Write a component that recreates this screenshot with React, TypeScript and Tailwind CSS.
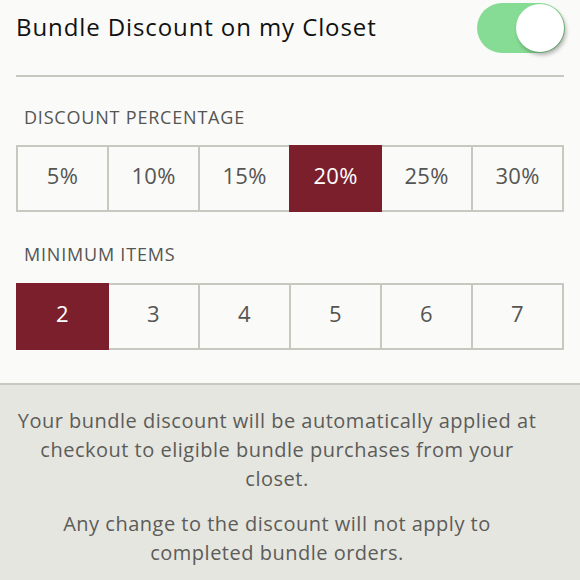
import React, { useState } from 'react';

const PERCENTS = ['5%', '10%', '15%', '20%', '25%', '30%'];
const ITEMS = ['2', '3', '4', '5', '6', '7'];

// Segmented row of options, one of which is picked
const OptionRow = ({
  options,
  value,
  onPick,
}: {
  options: string[];
  value: string;
  onPick: (v: string) => void;
}) => (
  <div className="mx-4 flex h-[67px]">
    {options.map((opt, i) => {
      const active = opt === value;
      return (
        <button
          key={opt}
          onClick={() => onPick(opt)}
          className={`flex flex-1 items-center justify-center border-2 pb-[6px] text-[22px] tracking-[0.3px] ${
            i === 0 ? '' : '-ml-[2px]'
          } ${
            active
              ? 'relative z-10 border-[#7b1f2d] bg-[#7b1f2d] text-white'
              : 'border-[#c8c8c0] bg-[#fafaf8] text-[#555553]'
          }`}
        >
          {opt}
        </button>
      );
    })}
  </div>
);

export default function App() {
  const [enabled, setEnabled] = useState(true);
  const [percent, setPercent] = useState('20%');
  const [minItems, setMinItems] = useState('2');

  return (
    <div
      className="flex h-[580px] w-full flex-col overflow-hidden bg-[#fafaf8]"
      style={{ fontFamily: '"Open Sans", Lato, sans-serif' }}
    >
      {/* header with toggle */}
      <div className="mt-[3px] flex h-[50px] items-center justify-between pl-4 pr-[15px]">
        <h1 className="-mt-[2px] text-[24px] tracking-[0.9px] text-[#111111]">Bundle Discount on my Closet</h1>
        <button
          onClick={() => setEnabled(!enabled)}
          className={`flex h-[50px] w-[88px] items-center rounded-full p-[1px] ${
            enabled ? 'justify-end bg-[#86dc95]' : 'justify-start bg-[#e4e4e0]'
          }`}
        >
          <span className="block h-[48px] w-[48px] rounded-full bg-white shadow-[2px_3px_4px_rgba(0,0,0,0.3)]" />
        </button>
      </div>

      <div className="mx-4 mt-[22px] h-[2px] bg-[#c8c8c0]" />

      <p className="mt-[31px] pl-6 text-[18px] leading-none tracking-[0.8px] text-[#555553]">DISCOUNT PERCENTAGE</p>
      <div className="mt-[19px]">
        <OptionRow options={PERCENTS} value={percent} onPick={setPercent} />
      </div>

      <p className="mt-[33px] pl-6 text-[18px] leading-none tracking-[0.8px] text-[#555553]">MINIMUM ITEMS</p>
      <div className="mt-[20px]">
        <OptionRow options={ITEMS} value={minItems} onPick={setMinItems} />
      </div>

      {/* info footer */}
      <div className="mt-[33px] flex-1 border-t-2 border-[#c8c8c0] bg-[#e6e6e0] pl-[14px] pr-[40px] pt-[21px] text-center text-[20px] leading-[29px] tracking-[0.5px] text-[#5c5c59]">
        <p>
          Your bundle discount will be automatically applied at
          <br />
          checkout to eligible bundle purchases from your
          <br />
          closet.
        </p>
        <p className="mt-[16px]">
          Any change to the discount will not apply to
          <br />
          completed bundle orders.
        </p>
      </div>
    </div>
  );
}
